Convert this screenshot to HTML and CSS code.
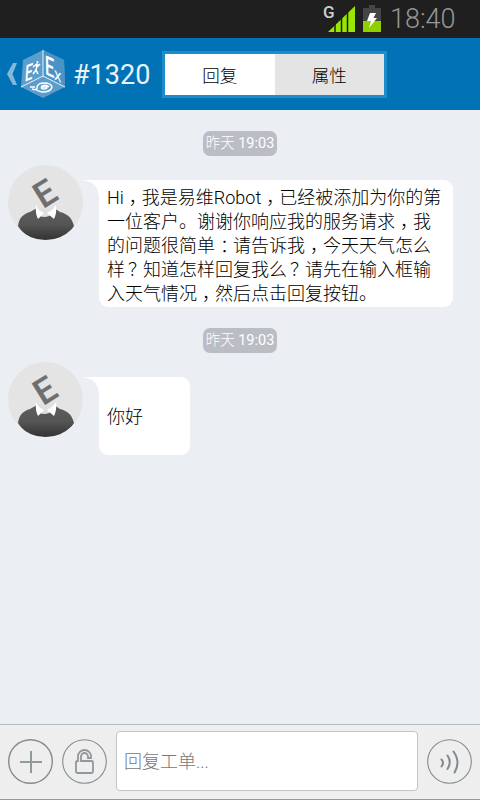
FILE: index.html
```
<!DOCTYPE html>
<html lang="zh-CN">
<head>
<meta charset="utf-8">
<title>#1320</title>
<link rel="stylesheet" href="styles.css">
</head>
<body>
<svg class="defs" width="0" height="0" aria-hidden="true">
  <defs>
    <linearGradient id="suit" x1="0" y1="0" x2="0" y2="1"><stop offset="0" stop-color="#5e5e5e"/><stop offset=".5" stop-color="#555"/><stop offset="1" stop-color="#303030"/></linearGradient>
    <clipPath id="round"><circle cx="37.5" cy="37.5" r="37.5"/></clipPath>
    <symbol id="person" viewBox="0 0 75 75">
      <circle cx="37.5" cy="37.5" r="37.5" fill="#e4e4e4"/>
      <g clip-path="url(#round)">
        <path d="M10 61C11 53 15 49 22 47L29 43L37 49L46 43L52 47C60 49 64 53 66 61C62 69 50 76 37 76S15 69 10 61Z" fill="url(#suit)"/>
        <path d="M29 41Q37 46 46 41L46 48Q37 55 30 50Z" fill="#e0e0e0"/>
        <path d="M28 40L31 45L36 48L30 54Q27 48 28 40ZM48 40L44 45L39 48L46 54Q49 48 48 40Z" fill="#fff"/>
      </g>
      <text class="face" transform="matrix(.85 -.53 .53 .85 23.700 22)" x="-2" y="24.500">E</text>
    </symbol>
  </defs>
</svg>
<div class="screen">
  <div class="status">
    <svg class="signal" width="34" height="36" viewBox="0 0 34 36">
      <text x="1" y="18" class="network">G</text>
      <path d="M6 32L33 6V32Z" fill="#99e600"/>
      <path d="M13 24V32M19.500 18V32M25.500 12V32" stroke="#1f1f1f" stroke-width="1.500"/>
    </svg>
    <svg class="battery" width="18" height="27" viewBox="0 0 18 27">
      <path d="M0 3H6V0H12V3H18V16H0Z" fill="#454545"/><path d="M0 16H18V27H0Z" fill="#8ed000"/>
      <path d="M7 8H13L10.500 13H14L6 23L8 16H4Z" fill="#fff"/>
    </svg>
    <span class="clock">18:40</span>
  </div>
  <header class="header">
    <svg class="back" width="12" height="24" viewBox="0 0 12 24"><path d="M7 1H11L6.500 12L11 23H7L1 12Z" fill="#80b9da"/></svg>
    <svg class="logo" width="46" height="50" viewBox="0 0 46 50">
      <path d="M23 1L44 11L45 38L23 49L1 38L3 11Z" fill="#5c9dcc"/>
      <path d="M23 1L44 11L45 38L23 27Z" fill="#4b93c6"/>
      <path d="M23 1V27L1 38M23 27L45 38" fill="none" stroke="#e8f3fa" stroke-width="1"/>
      <text class="cube-letter" transform="matrix(.68 -.28 -.08 1.150 4.500 33)">E</text>
      <path d="M17.500 12V14M13 18L17 15L18 17L20 15M17 16L16 21L18 25M16 21L13 25" fill="none" stroke="#fff" stroke-width="1.500"/>
      <text class="cube-letter" transform="matrix(.85 .4 .03 1.350 25 25)">E</text>
      <text class="cube-small" transform="matrix(1.100 .6 .02 1.250 34 30)">x</text>
      <path d="M10 38L15 38M12 40Q18 42 17 38Q18 34 24 34Q31 34 32 38Q31 43 22 43Q17 42 15 40M29 38Q26 35 22 37Q20 40 24 40Q27 40 27 38L22 38" fill="none" stroke="#fff" stroke-width="1.400"/>
    </svg>
    <h1 class="title">#1320</h1>
    <nav class="tabs"><span class="tab active">回复</span><span class="tab">属性</span></nav>
  </header>
  <main class="chat">
    <time class="stamp">昨天 <span class="hour">19:03</span></time>
    <section class="message">
      <svg class="avatar" width="75" height="75"><use href="#person"/></svg>
      <svg class="tail" width="16" height="20" viewBox="0 0 16 20"><path d="M0 0H16V20C16 8 12 2 0 0Z" fill="#fff"/></svg>
      <p class="bubble">Hi<span class="mark">，</span>我是易维Robot<span class="mark">，</span>已经被添加为你的第<br>一位客户。谢谢你响应我的服务请求<span class="mark">，</span>我<br>的问题很简单<span class="mark">：</span>请告诉我<span class="mark">，</span>今天天气怎么<br>样<span class="mark query">？</span>知道怎样回复我么<span class="mark query">？</span>请先在输入框输<br>入天气情况<span class="mark">，</span>然后点击回复按钮。</p>
    </section>
    <time class="stamp">昨天 <span class="hour">19:03</span></time>
    <section class="message">
      <svg class="avatar" width="75" height="75"><use href="#person"/></svg>
      <svg class="tail" width="16" height="20" viewBox="0 0 16 20"><path d="M0 0H16V20C16 8 12 2 0 0Z" fill="#fff"/></svg>
      <p class="bubble short">你好</p>
    </section>
  </main>
  <footer class="composer">
    <svg class="action" width="45" height="45" viewBox="0 0 45 45"><circle cx="22.500" cy="22.500" r="21.800"/><path d="M12 23H34M23 12V34" class="thick"/></svg>
    <svg class="action" width="45" height="45" viewBox="0 0 45 45"><circle cx="22.500" cy="22.500" r="21.800" class="thin"/><path d="M16 22V17.500A6.500 6.500 0 0 1 29 17.500V19H26V17.500A3.500 3.500 0 0 0 19 17.500V22H29.500Q31 22 31 23.500V32.500Q31 34 29.500 34H15.500Q14 34 14 32.500V23.500Q14 22 16 22Z" class="lock"/></svg>
    <div class="field">回复工单...</div>
    <svg class="action" width="45" height="45" viewBox="0 0 45 45"><circle cx="22.500" cy="22.500" r="21.800" class="thin"/><path d="M14.500 20.500Q17.500 23.500 14.500 27.500M20.500 16.500Q25 23 20.500 30M26.500 12.500Q34 23 27.500 33.500" class="wave"/></svg>
  </footer>
</div>
</body>
</html>
```
FILE: styles.css
```
* { box-sizing: border-box; }
body { margin: 0; font-family: Roboto, "Noto Sans CJK SC", sans-serif; font-weight: 300; }
.defs { display: block; height: 0; }
.face { font: 500 35px Roboto, sans-serif; fill: #6e6e6e; stroke: #6e6e6e; stroke-width: .4; }
.screen { width: 480px; height: 800px; display: flex; flex-direction: column; background: #ebeef3; overflow: hidden; }
.status { height: 38px; background: #1f1f1f; display: flex; align-items: flex-start; padding: 0 24px 0 0; justify-content: flex-end; }
.signal { margin: 0 7px 0 0; }
.network { font: 500 17px Roboto, sans-serif; fill: #d0d0d0; }
.battery { margin: 5px 9px 0 0; }
.clock { margin-top: 4px; font-size: 27px; line-height: 30px; color: #969696; width: 66px; white-space: nowrap; }
.header { height: 72px; background: #0072b5; display: flex; align-items: center; padding-left: 6px; }
.back { margin-right: 2px; }
.logo { width: 46px; }
.cube-letter { font: 500 20px Roboto, sans-serif; fill: #fff; }
.cube-small { font: 400 14px Roboto, sans-serif; fill: #fff; }
.title { margin: 2px 0 0 7px; width: 89px; font-size: 27px; font-weight: 400; line-height: 32px; color: #e9f3fa; }
.tabs { display: flex; width: 225px; height: 47px; border: 3px solid #1c8cca; font-size: 17.5px; }
.tab { flex: 1; display: flex; align-items: center; justify-content: center; background: #e4e4e4; color: #000; }
.tab.active { background: #fff; }
.chat { flex: 1; padding: 21px 8px 0; display: flex; flex-direction: column; }
.stamp { align-self: center; width: 74px; height: 25px; border-radius: 7px; background: #babec4; color: #fff; font-size: 14.5px; line-height: 26px; text-align: center; white-space: nowrap; }
.hour { font-weight: 400; }
.message { display: flex; align-items: flex-start; margin-top: 9px; }
.tail { margin-top: 15px; }
.bubble { margin: 15px 0 0; width: 354px; height: 127px; padding: 6px 8px 0; border-radius: 0 9px 9px 9px; background: #fff; color: #000; font-size: 18px; line-height: 24px; white-space: nowrap; }
.mark { padding-left: 5px; letter-spacing: -5px; }
.query { padding-left: 3px; letter-spacing: -3px; }
.message + .stamp { margin-top: 21px; }
.bubble.short { width: 91px; height: 78px; padding-top: 28px; }
.composer { height: 76px; border-top: 1px solid #b9babc; border-bottom: 1px solid #999; background: #eee; display: flex; align-items: center; gap: 9px; padding: 0 8px 2px; }
.action { fill: none; stroke: #848c90; stroke-width: 1.4; }
.thin { stroke-width: 1.1; }
.thick { stroke: #929a9e; stroke-width: 2; }
.lock { stroke: #92979b; stroke-width: 1.8; }
.wave { stroke: #808990; stroke-width: 2; stroke-linecap: round; }
.field { flex: 1; height: 60px; border: 1px solid #c5c5c5; border-radius: 4px; background: #fff; padding-left: 7px; font-size: 18px; line-height: 60px; color: #777; }
```
